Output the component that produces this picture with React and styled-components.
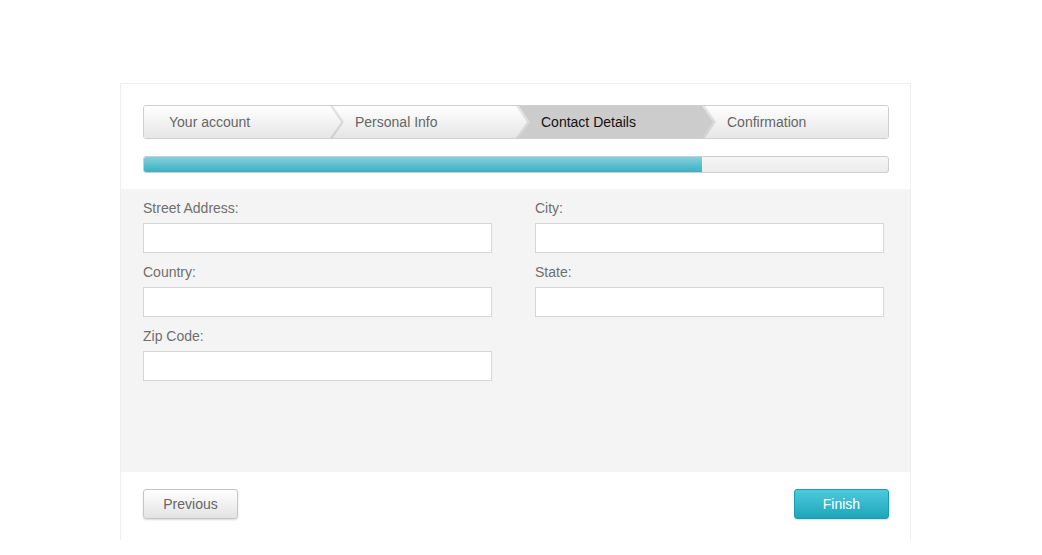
import React from "react";
import styled, { createGlobalStyle } from "styled-components";

const Global = createGlobalStyle`
  html, body { margin: 0; padding: 0; background: #fff; }
  body { font-family: "Liberation Sans", Arial, sans-serif; font-size: 14px; }
  * { box-sizing: border-box; }
`;

const Page = styled.div`
  padding: 83px 0 0 120px;
  height: 555px;
  overflow: hidden;
`;

const Card = styled.div`
  width: 791px;
  height: 457px;
  border: 1px solid #efefef;
  border-bottom: none;
  background: #fff;
`;

const Top = styled.div`
  padding: 21px 21px 16px 22px;
  display: flex;
  flex-direction: column;
  gap: 17px;
`;

const Steps = styled.div`
  display: flex;
  height: 34px;
  border: 1px solid #cfcfcf;
  border-radius: 3px;
  overflow: hidden;
  width: 746px;
`;

const Step = styled.div`
  position: relative;
  flex: 1;
  display: flex;
  align-items: center;
  padding-left: 25px;
  color: ${(p) => (p.$active ? "#111" : "#666")};
  background: ${(p) =>
    p.$active ? "#cccccc" : "linear-gradient(#ffffff, #e6e6e6)"};
  font-size: 14px;
  &::before {
    content: "";
    display: ${(p) => (p.$last ? "none" : "block")};
    position: absolute;
    top: 0;
    right: -14px;
    width: 14px;
    height: 100%;
    z-index: 2;
    background: linear-gradient(#e6e6e6, #d0d0d0);
    clip-path: polygon(0 0, 3px 0, 100% 50%, 3px 100%, 0 100%);
  }
  &::after {
    content: "";
    display: ${(p) => (p.$last ? "none" : "block")};
    position: absolute;
    top: 0;
    right: -11px;
    width: 11px;
    height: 100%;
    z-index: 3;
    background: ${(p) =>
      p.$active ? "#cccccc" : "linear-gradient(#ffffff, #e6e6e6)"};
    clip-path: polygon(0 0, 100% 50%, 0 100%);
  }
`;

const Progress = styled.div`
  width: 746px;
  height: 17px;
  border: 1px solid #cdcdcd;
  border-radius: 3px;
  background: linear-gradient(#f7f7f7, #ebebeb);
  overflow: hidden;
`;

const Fill = styled.div`
  height: 100%;
  background: linear-gradient(#84d0dc, #3ab0c4);
`;

const FormArea = styled.div`
  background: #f4f4f4;
  height: 283px;
  padding: 9px 22px 0 22px;
  display: grid;
  grid-template-columns: 349px 349px;
  column-gap: 43px;
  row-gap: 9px;
  align-content: start;
`;

const Field = styled.div`
  display: flex;
  flex-direction: column;
  gap: 5px;
`;

const Label = styled.label`
  color: #6f6f6f;
  font-size: 14px;
  line-height: 20px;
`;

const Input = styled.input`
  height: 30px;
  border: 1px solid #d6d6d6;
  background: #fff;
  padding: 0 8px;
  font-family: inherit;
  font-size: 14px;
  outline: none;
`;

const Footer = styled.div`
  display: flex;
  justify-content: space-between;
  padding: 17px 21px 0 22px;
`;

const Button = styled.button`
  width: 95px;
  height: 30px;
  border-radius: 3px;
  font-family: inherit;
  font-size: 14px;
  cursor: pointer;
  border: 1px solid ${(p) => (p.$primary ? "#1a9db3" : "#c6c6c6")};
  color: ${(p) => (p.$primary ? "#fff" : "#666")};
  background: ${(p) =>
    p.$primary
      ? "linear-gradient(#4dcadc, #1fa5bb)"
      : "linear-gradient(#ffffff, #e3e3e3)"};
  box-shadow: 0 1px 2px rgba(0, 0, 0, 0.15);
`;

const steps = ["Your account", "Personal Info", "Contact Details", "Confirmation"];

const fields = ["Street Address:", "City:", "Country:", "State:", "Zip Code:"];

export default function App() {
  return (
    <>
      <Global />
      <Page>
        <Card>
          <Top>
            <Steps>
              {steps.map((s, i) => (
                <Step key={s} $last={i === steps.length - 1} $active={i === 2}>
                  {s}
                </Step>
              ))}
            </Steps>
            <Progress>
              <Fill style={{ width: "75%" }} />
            </Progress>
          </Top>
          <FormArea>
            {fields.map((f) => (
              <Field key={f}>
                <Label>{f}</Label>
                <Input type="text" />
              </Field>
            ))}
          </FormArea>
          <Footer>
            <Button>Previous</Button>
            <Button $primary>Finish</Button>
          </Footer>
        </Card>
      </Page>
    </>
  );
}
